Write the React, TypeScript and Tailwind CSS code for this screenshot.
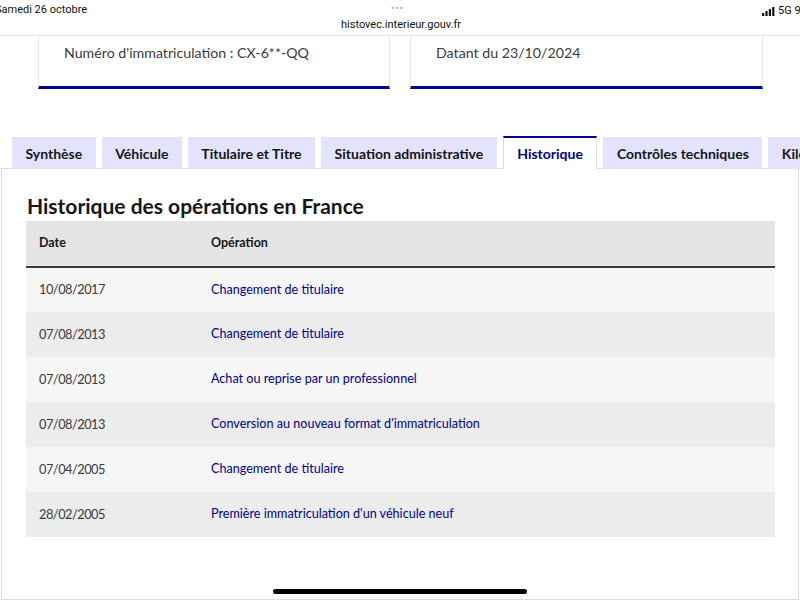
import React from "react";

const operations = [
  { date: "10/08/2017", label: "Changement de titulaire" },
  { date: "07/08/2013", label: "Changement de titulaire" },
  { date: "07/08/2013", label: "Achat ou reprise par un professionnel" },
  { date: "07/08/2013", label: "Conversion au nouveau format d'immatriculation" },
  { date: "07/04/2005", label: "Changement de titulaire" },
  { date: "28/02/2005", label: "Première immatriculation d'un véhicule neuf" },
];

const tabs = [
  "Synthèse",
  "Véhicule",
  "Titulaire et Titre",
  "Situation administrative",
  "Historique",
  "Contrôles techniques",
  "Kilométrage",
];

function SignalIcon() {
  return (
    <svg width="13" height="9" viewBox="0 0 13 9">
      <rect x="0" y="6" width="2.2" height="3" rx="0.5" fill="#111" />
      <rect x="3.4" y="4" width="2.2" height="5" rx="0.5" fill="#111" />
      <rect x="6.8" y="2" width="2.2" height="7" rx="0.5" fill="#111" />
      <rect x="10.2" y="0" width="2.2" height="9" rx="0.5" fill="#111" />
    </svg>
  );
}

export default function App() {
  return (
    <div
      className="w-[800px] h-[600px] bg-white overflow-hidden flex flex-col relative"
      style={{ fontFamily: "Lato, 'Noto Sans', sans-serif" }}
    >
      {/* Barre d'état + adresse */}
      <div
        className="h-[36px] shrink-0 border-b border-[#e6e6e6] relative"
        style={{ fontFamily: "Roboto, 'Liberation Sans', sans-serif" }}
      >
        <span className="absolute left-[-5px] top-[2px] text-[11px] text-[#111] whitespace-nowrap">Samedi 26 octobre</span>
        <span className="absolute left-[391px] top-[1px] text-[10px] tracking-[1px] text-[#b0b0b0]">•••</span>
        <span className="absolute left-[341px] top-[17px] text-[11px] text-[#111] whitespace-nowrap">histovec.interieur.gouv.fr</span>
        <div className="absolute left-[762px] top-[3px] flex items-center gap-[3px] text-[11px] text-[#111] whitespace-nowrap">
          <SignalIcon />
          <span>5G 9</span>
        </div>
      </div>

      {/* Cartes d'en-tête */}
      <div className="flex gap-[20px] pl-[38px] shrink-0">
        <div className="w-[352px] h-[53px] border-x border-[#e5e5e5] border-b-[3px] border-b-[#000091] pl-[25px] pt-[6px] text-[14.2px] text-[#3a3a3a]">
          Numéro d'immatriculation : CX-6**-QQ
        </div>
        <div className="w-[353px] h-[53px] border-x border-[#e5e5e5] border-b-[3px] border-b-[#000091] pl-[25px] pt-[6px] text-[14.2px] text-[#3a3a3a]">
          Datant du 23/10/2024
        </div>
      </div>

      {/* Onglets */}
      <div className="flex gap-[6px] pl-[12px] mt-[47px] shrink-0 relative z-10">
        {tabs.map((tab) =>
          tab === "Historique" ? (
            <div
              key={tab}
              className="h-[33px] px-[13.5px] bg-white border-t-2 border-t-[#000091] border-x border-x-[#dddddd] flex items-center text-[14px] font-bold text-[#000091] whitespace-nowrap"
            >
              {tab}
            </div>
          ) : (
            <div
              key={tab}
              className="h-[32px] mt-[1px] px-[13.5px] bg-[#e3e3fd] flex items-center text-[14px] font-bold text-[#161616] whitespace-nowrap"
            >
              {tab}
            </div>
          )
        )}
      </div>

      {/* Panneau Historique */}
      <div className="flex-1 mx-[1px] -mt-[1px] border border-[#dddddd] pt-[25px] px-[24px]">
        <h2 className="text-[21px] font-bold text-[#161616] leading-[24px] mb-[3px] pl-[1px]">
          Historique des opérations en France
        </h2>
        <table className="w-[749px] text-left border-collapse">
          <thead>
            <tr className="bg-[#e5e5e5] h-[46px] border-b-2 border-[#3a3a3a]">
              <th className="pl-[13px] w-[185px] text-[12.5px] font-bold text-[#161616]">Date</th>
              <th className="text-[12.5px] font-bold text-[#161616]">Opération</th>
            </tr>
          </thead>
          <tbody>
            {operations.map((op, i) => (
              <tr key={i} className={`h-[45px] ${i % 2 === 0 ? "bg-[#f6f6f6]" : "bg-[#ececec]"}`}>
                <td className="pl-[13px] text-[12.8px] tracking-[-0.5px] text-[#3a3a3a]">{op.date}</td>
                <td className="text-[12.6px] text-[#000091]">{op.label}</td>
              </tr>
            ))}
          </tbody>
        </table>
      </div>

      {/* Indicateur d'accueil */}
      <div className="absolute left-[273px] top-[589px] w-[254px] h-[5px] rounded-full bg-black" />
    </div>
  );
}
